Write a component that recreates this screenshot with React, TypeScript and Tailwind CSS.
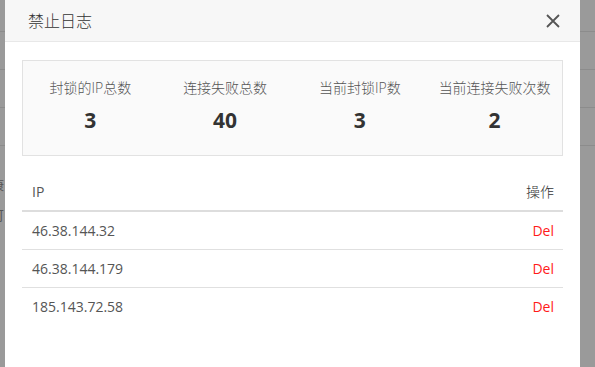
import React from 'react';

const stats = [
  { label: '封锁的IP总数', value: 3 },
  { label: '连接失败总数', value: 40 },
  { label: '当前封锁IP数', value: 3 },
  { label: '当前连接失败次数', value: 2 },
];

const ips = ['46.38.144.32', '46.38.144.179', '185.143.72.58'];

const App: React.FC = () => {
  return (
    <div
      className="relative w-[595px] h-[367px] overflow-hidden bg-[#9a9a9a]"
      style={{ fontFamily: '"Open Sans", "Noto Sans CJK SC", sans-serif' }}
    >
      {/* page behind the mask */}
      <div className="flex flex-col">
        <div className="h-[32px] border-b border-[#8c8c8c]" />
        <div className="h-[38px] border-b border-[#8c8c8c]" />
        <div className="h-[38px] border-b border-[#8c8c8c]" />
        <div className="h-[38px] border-b border-[#8c8c8c]" />
        <div className="h-[24px]" />
        <div className="text-[13px] leading-[30px] text-[#555] -ml-[9px]">康</div>
        <div className="text-[13px] leading-[30px] text-[#555] -ml-[9px]">可</div>
      </div>

      {/* dialog */}
      <div className="absolute left-[5px] top-0 w-[575px] h-[400px] bg-white">
        <div className="flex items-center justify-between h-[42px] px-[23px] bg-[#f7f7f7] border-b border-[#e8e8e8]">
          <span className="text-[16px] font-light text-[#333]">禁止日志</span>
          <button className="-mr-[3px]">
            <svg width="14" height="14" viewBox="0 0 14 14">
              <path d="M1 1L13 13M13 1L1 13" stroke="#555" strokeWidth="1.8" />
            </svg>
          </button>
        </div>

        <div className="px-[17px] pt-[18px]">
          <div className="grid grid-cols-4 h-[96px] bg-[#fafafa] border border-[#e2e2e2]">
            {stats.map(s => (
              <div key={s.label} className="flex flex-col items-center pt-[16px]">
                <span className="text-[14px] leading-[22px] font-light text-[#555]">{s.label}</span>
                <span className="mt-[8px] text-[21px] leading-[26px] font-bold text-[#333]">{s.value}</span>
              </div>
            ))}
          </div>

          <table className="w-full mt-[17px] text-[14px] text-[#555]">
            <thead>
              <tr className="border-b-2 border-[#dddddd]">
                <th className="h-[38px] px-[10px] text-left font-normal">IP</th>
                <th className="h-[38px] px-[9px] text-right font-light text-[14px] text-[#333]">操作</th>
              </tr>
            </thead>
            <tbody>
              {ips.map((ip, i) => (
                <tr key={ip} className={i < ips.length - 1 ? 'border-b border-[#e0e0e0]' : ''}>
                  <td className="h-[38px] px-[10px]">{ip}</td>
                  <td className="h-[38px] px-[9px] text-right text-[#ff1a1a]">Del</td>
                </tr>
              ))}
            </tbody>
          </table>
        </div>
      </div>
    </div>
  );
};

export default App;
